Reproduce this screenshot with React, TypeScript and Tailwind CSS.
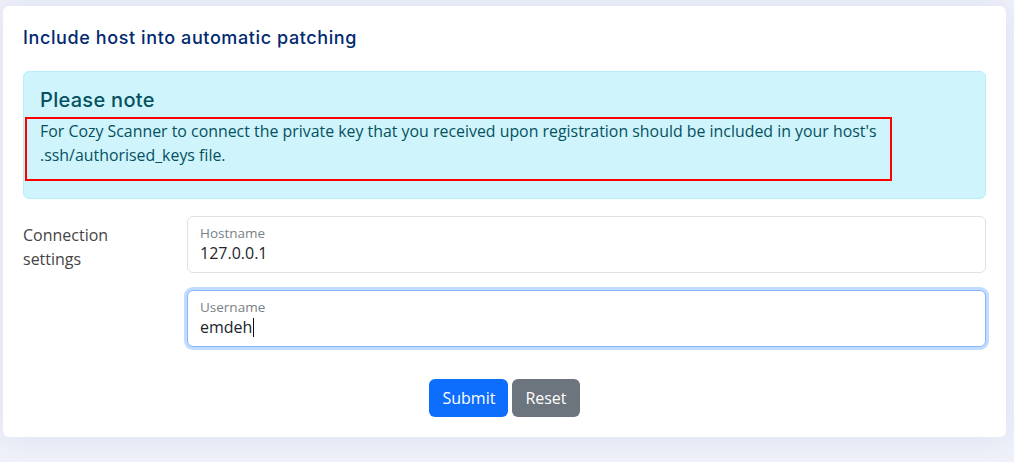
import React from "react";

const body = "font-['Open_Sans',sans-serif]";
const heading = "font-['Inter','Noto_Sans',sans-serif]";

function FloatingField({
  label,
  value,
  focused = false,
}: {
  label: string;
  value: string;
  focused?: boolean;
}) {
  return (
    <div
      className={`h-[57px] rounded-md border bg-white px-3 pt-[7px] ${
        focused
          ? "border-[#86b7fe] shadow-[0_0_0_3px_rgba(13,110,253,0.25)]"
          : "border-[#dee2e6]"
      }`}
    >
      <div className="text-[13.5px] leading-[18px] text-[#7a7f85]">{label}</div>
      <div className="flex items-center text-[16px] leading-[22px] text-[#212529]">
        {value}
        {focused && <span className="ml-px inline-block h-[19px] w-px bg-[#111]" />}
      </div>
    </div>
  );
}

export default function App() {
  return (
    <div className={`h-[462px] w-full bg-[#eef1f9] pl-[3px] pr-2 pt-[6px] ${body}`}>
      <div className="rounded-md bg-white px-5 pb-5 pt-5 shadow-[0_0_30px_rgba(1,41,112,0.08)]">
        <h5
          className={`text-[18px] font-medium leading-[24px] tracking-[0.6px] text-[#012970] ${heading}`}
        >
          Include host into automatic patching
        </h5>

        <div className="mt-[21px] rounded-md border border-[#b6effb] bg-[#cff4fc] pb-[17px] pt-4 text-[#055160]">
          <h4
            className={`pl-4 text-[20px] font-medium leading-[24px] tracking-[0.3px] ${heading}`}
          >
            Please note
          </h4>
          <div className="ml-px mt-[5px] w-[867px] border-2 border-[#ff0000] pb-3 pl-[13px] text-[15.9px] leading-[24px]">
            For Cozy Scanner to connect the private key that you received upon registration
            should be included in your host's .ssh/authorised_keys file.
          </div>
        </div>

        <div className="mt-[17px] flex">
          <div className="w-[164px] pt-[7px] text-[16px] leading-[24px] text-[#444]">
            Connection
            <br />
            settings
          </div>
          <div className="flex flex-1 flex-col gap-[17px]">
            <FloatingField label="Hostname" value="127.0.0.1" />
            <FloatingField label="Username" value="emdeh" focused />
          </div>
        </div>

        <div className="mt-8 flex justify-center gap-1">
          <button className="h-[38px] rounded-md bg-[#0d6efd] px-[13px] text-[16px] text-white">
            Submit
          </button>
          <button className="h-[38px] rounded-md bg-[#6c757d] px-[13px] text-[16px] text-white">
            Reset
          </button>
        </div>
      </div>
    </div>
  );
}
